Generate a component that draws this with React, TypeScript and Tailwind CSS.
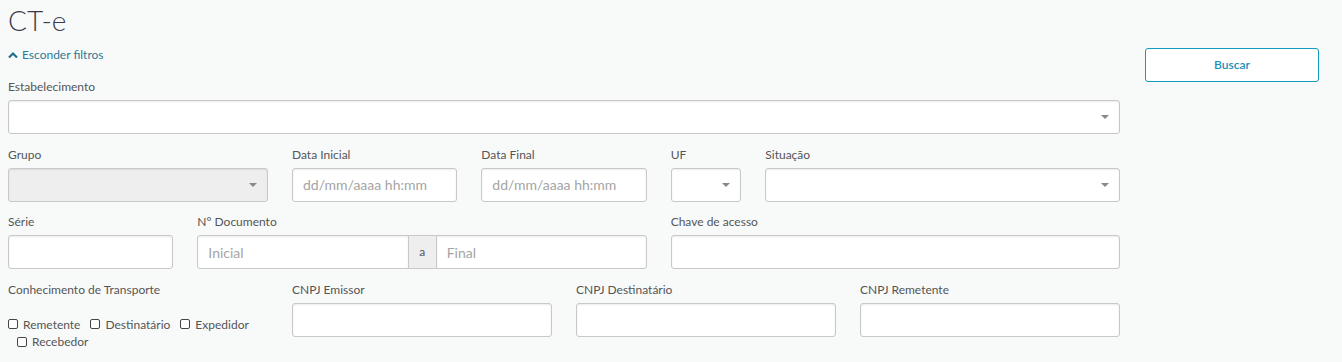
import React from "react";

const inputBase =
    "h-[34px] w-full rounded-[3px] border border-[#c8c8c8] shadow-[inset_0_1px_2px_rgba(0,0,0,0.08)]";

function Caret() {
    return (
        <span className="absolute right-[10px] top-1/2 -translate-y-1/2 h-0 w-0 border-x-[4px] border-t-[4px] border-x-transparent border-t-[#888]" />
    );
}

function Field({
    label,
    className = "",
    children,
}: {
    label: string;
    className?: string;
    children: React.ReactNode;
}) {
    return (
        <div className={`flex flex-col ${className}`}>
            <label className="h-[15px] mb-[6px] text-[12px] leading-[15px] text-[#555]">{label}</label>
            {children}
        </div>
    );
}

function Select({ disabled = false }: { disabled?: boolean }) {
    return (
        <div className={`${inputBase} relative ${disabled ? "bg-[#eeeeee]" : "bg-white"}`}>
            <Caret />
        </div>
    );
}

function TextInput({ placeholder = "" }: { placeholder?: string }) {
    return (
        <input
            className={`${inputBase} bg-white px-[10px] text-[14px] text-[#555] placeholder:text-[#a5a5a5] outline-none`}
            placeholder={placeholder}
        />
    );
}

function Check({ label }: { label: string }) {
    return (
        <label className="inline-flex items-center gap-[5px] mr-[10px]">
            <span className="h-[10px] w-[10px] rounded-[2px] border border-[#444] bg-white" />
            <span>{label}</span>
        </label>
    );
}

export default function App() {
    return (
        <div className="min-h-[362px] bg-[#f8fafa] px-[8px] pt-[3px] font-['Lato','Open_Sans',sans-serif]">
            <h1 className="text-[28px] font-light leading-[34px] text-[#3a3a4a]">CT-e</h1>

            <div className="flex gap-[25px]">
                {/* Filtros */}
                <div className="w-[1112px]">
                    <button className="mt-[10px] flex items-center gap-[4px] text-[12px] leading-[16px] text-[#2c7a94]">
                        <svg width="10" height="8" viewBox="0 0 10 8">
                            <path d="M1 6.5 L5 2.5 L9 6.5" fill="none" stroke="#1f6e8c" strokeWidth="2.2" />
                        </svg>
                        Esconder filtros
                    </button>

                    <div className="mt-[16px] grid grid-cols-12 gap-x-[24px] gap-y-[12.5px]">
                        <Field label="Estabelecimento" className="col-span-12">
                            <Select />
                        </Field>

                        <Field label="Grupo" className="col-span-3">
                            <Select disabled />
                        </Field>
                        <Field label="Data Inicial" className="col-span-2">
                            <TextInput placeholder="dd/mm/aaaa hh:mm" />
                        </Field>
                        <Field label="Data Final" className="col-span-2">
                            <TextInput placeholder="dd/mm/aaaa hh:mm" />
                        </Field>
                        <Field label="UF" className="col-span-1">
                            <Select />
                        </Field>
                        <Field label="Situação" className="col-span-4">
                            <Select />
                        </Field>

                        <Field label="Série" className="col-span-2">
                            <TextInput />
                        </Field>
                        <Field label="N° Documento" className="col-span-5">
                            <div className="flex h-[34px]">
                                <input
                                    className="h-full flex-1 min-w-0 rounded-l-[3px] border border-[#c8c8c8] bg-white px-[10px] text-[14px] placeholder:text-[#a5a5a5] outline-none shadow-[inset_0_1px_2px_rgba(0,0,0,0.08)]"
                                    placeholder="Inicial"
                                />
                                <span className="flex w-[27px] items-center justify-center border-y border-[#c8c8c8] bg-[#eeeeee] text-[12px] text-[#555]">
                                    a
                                </span>
                                <input
                                    className="h-full w-[211px] rounded-r-[3px] border border-[#c8c8c8] bg-white px-[10px] text-[14px] placeholder:text-[#a5a5a5] outline-none shadow-[inset_0_1px_2px_rgba(0,0,0,0.08)]"
                                    placeholder="Final"
                                />
                            </div>
                        </Field>
                        <Field label="Chave de acesso" className="col-span-5">
                            <TextInput />
                        </Field>

                        <Field label="Conhecimento de Transporte" className="col-span-3">
                            <div className="pt-[13px] text-[12px] leading-[17px] text-[#555]">
                                <Check label="Remetente" />
                                <Check label="Destinatário" />
                                <Check label="Expedidor" />
                                <div className="pl-[9px]">
                                    <Check label="Recebedor" />
                                </div>
                            </div>
                        </Field>
                        <Field label="CNPJ Emissor" className="col-span-3">
                            <TextInput />
                        </Field>
                        <Field label="CNPJ Destinatário" className="col-span-3">
                            <TextInput />
                        </Field>
                        <Field label="CNPJ Remetente" className="col-span-3">
                            <TextInput />
                        </Field>
                    </div>
                </div>

                {/* Ações */}
                <div className="w-[174px] pt-[11px]">
                    <button className="h-[34px] w-full rounded-[3px] border border-[#0f9bc0] bg-white text-[12px] font-semibold text-[#1c8fb8]">
                        Buscar
                    </button>
                </div>
            </div>
        </div>
    );
}
